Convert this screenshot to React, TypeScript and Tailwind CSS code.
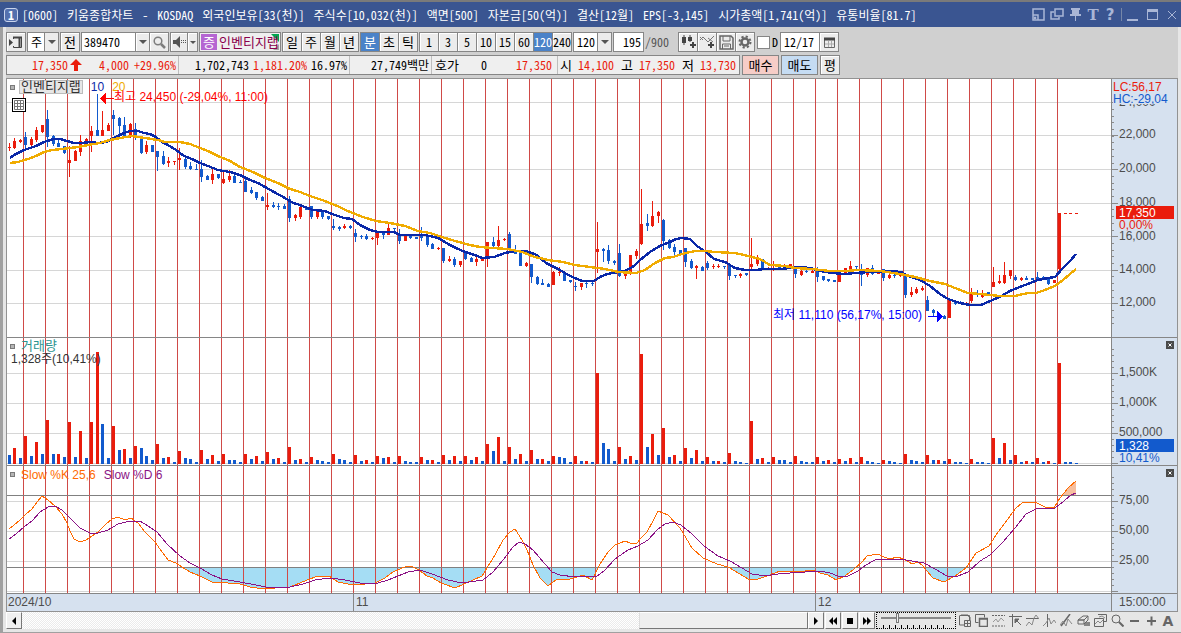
import React from "react";

const UP = "#ea1c0c";
const DOWN = "#125acd";

type Candle = [string, number, number, number, number];

// Direction followed by wick top, body top, body bottom, wick bottom.
const CANDLE_SOURCE = `
r143,147,148,151 r138,141,148,149 r139,140,142,143 b132,137,145,149 r137,139,145,147 r127,130,140,142 r125,125,132,133 b110,119,137,147
b135,136,144,146 b140,143,147,147 b146,146,153,154 r146,160,163,177 r150,151,161,161 r135,141,152,156 r138,139,143,145 r126,131,136,152
b94,130,136,136 r111,130,136,136 r123,125,131,131 b110,115,119,135 b117,118,126,134 b117,125,136,136 r123,124,135,138 b123,129,138,140
b137,137,153,154 r141,145,152,154 b145,145,152,152 b151,151,157,171 b151,156,164,165 r157,161,163,167 r161,161,162,165 r148,158,160,170
b157,159,167,169 b162,166,169,170 b164,169,170,170 b160,169,177,182 b175,176,180,180 r169,174,180,184 b174,174,178,179 r171,179,183,184
r170,176,180,182 b175,176,183,183 b180,182,183,183 b178,181,192,192 b187,190,193,194 b192,192,198,200 b196,197,201,201 r193,205,207,210
b202,205,207,208 b203,206,207,210 b204,206,209,209 b196,199,218,222 r214,215,218,221 r207,207,217,219 b208,208,210,210 b206,206,217,219
r210,211,217,219 b211,211,217,219 b216,216,219,220 b219,226,228,230 b226,227,229,231 r224,226,228,229 b225,226,228,229 b229,233,237,242
b235,236,237,239 b234,236,239,240 r237,238,239,240 r232,233,238,245 b232,232,235,239 r224,228,235,235 b228,228,229,232 b229,234,241,244
r235,235,241,241 b234,236,238,239 b237,237,239,239 b227,235,238,241 b236,237,245,247 b243,244,249,249 r247,248,249,250 b248,248,261,263
r256,259,261,262 b257,259,265,267 r261,261,265,267 b251,253,259,260 b257,258,262,262 r257,259,262,266 r257,258,261,261 r242,242,259,267
b237,242,246,249 r226,240,246,247 r238,239,240,241 b232,234,250,251 b245,250,254,254 b252,253,266,266 r262,263,266,267 b264,264,277,283
b276,277,284,285 b279,283,285,285 b283,284,287,287 r271,272,285,285 r267,272,273,276 b272,272,281,281 b280,280,282,283 b282,286,287,291
r283,283,287,290 b282,283,284,288 b282,283,284,286 r222,249,252,273 b248,249,251,262 b245,250,261,264 b260,261,263,265 b244,253,276,277
r272,273,276,279 r255,255,274,275 r249,251,256,259 r189,224,244,245 b214,223,226,231 r201,216,226,227 r211,212,216,223 b219,220,241,250
b239,240,248,249 b244,247,252,256 b250,250,254,254 b248,248,262,267 b259,261,268,269 r265,266,268,279 b266,267,271,271 b261,263,268,270
r264,266,267,269 r264,266,267,268 b266,266,267,269 b264,264,276,280 b275,275,276,278 r273,274,276,278 b273,273,275,276 r238,264,267,270
r255,259,264,266 b259,259,269,269 r267,268,269,270 r261,265,266,271 b265,266,269,269 r264,266,270,270 r264,264,267,268 b267,267,274,278
r269,271,275,276 b268,271,272,273 r270,271,273,273 b267,270,277,282 b276,276,280,281 b279,279,281,282 b280,280,282,282 r270,272,282,282
r268,268,273,273 r261,266,269,270 b266,266,267,270 b264,269,275,286 r268,268,275,277 b265,268,274,275 r271,271,274,274 b269,269,278,281
r273,275,278,279 b274,275,276,278 r273,274,276,277 b275,275,295,298 r287,292,295,297 r287,289,293,294 r286,288,290,291 b296,300,311,311
b309,310,313,316 b312,313,315,316 b315,316,319,319 r300,300,318,318 b300,302,304,305 b301,302,304,304 r302,303,305,305 r288,293,301,303
b290,293,295,297 r290,293,297,298 b292,292,295,296 r267,282,287,287 r275,281,283,284 r262,275,283,284 r270,270,276,279 b275,277,280,281
r277,278,280,281 b276,278,280,280 b278,278,280,280 b272,277,279,279 b276,277,279,279 b278,279,284,285 r280,280,283,283 r213,213,269,272
r213,213,214,213 r213,213,214,213 r213,213,214,213`;

const CANDLES: Candle[] = CANDLE_SOURCE.trim().split(/\s+/).map((t) => {
  const [h, a, b, l] = t.slice(1).split(",").map(Number);
  return [t[0], h, a, b, l];
});

// Bar direction and height, one entry for each candle.
const VOLUMES = `b9 r16 b6 r28 b8 r22 b10 r44 b10 r10 b7 r42 b7 r33 b6 r42 r112 b40 b6 r38 b14 r15 b6 r18 b16 b8 b4 r20 b6 r7 b2 r13
b6 b5 b2 r14 b5 r9 b3 r10 b4 b4 b2 r10 b5 r8 b3 r12 b5 r6 b2 r17 b4 r5 b2 r7 b4 b3 b2 r10 b5 b4 b2 r9 b3 r4 b2 r8 b6 r7 b2 r8
b3 b2 b2 r7 b4 r4 b2 r9 b4 r8 b3 r8 b4 r7 b3 r20 b13 r27 b3 r17 b5 r10 b3 r14 b5 r5 b3 r8 b7 b6 b2 r8 b3 r3 b2 r91
b21 b15 b3 r17 b5 r8 b4 r110 b17 r30 b9 r36 b7 r9 b3 r16 b6 r14 b3 r7 b3 r3 b2 r11 b3 b2 b1 r43 b5 r6 b2 r7 b4 b4 b2 r8
b3 b2 b2 r7 b3 r4 b2 r5 b3 r6 b2 r7 b3 b2 b1 r4 b3 b2 b1 r10 b4 b3 b2 r9 b4 r4 b3 r5 b2 b2 b1 r5 b2 b2 b1 r26
b6 r21 b4 r9 b2 r3 b2 r6 b2 r3 b1 r101 b2 b2 b1`
  .split(/\s+/)
  .map((t) => [t[0], Number(t.slice(1))] as [string, number]);

const MA10 =
  "10,158 14,155 18,153 24,150 30,148 36,146 42,143 47,141 54,139 60,139 67,141 74,143 82,143 90,142 98,143 106,142 112,139 118,136 124,133 130,131 138,131 144,133 150,134 156,137 162,142 168,145 176,150 184,156 192,159 200,163 208,166 218,170 230,172 240,175 250,180 258,183 265,187 274,192 285,198 293,203 297,204 305,207 313,210 325,211 332,214 344,218 352,219 360,225 370,230 378,232 394,232 400,235 425,235 438,238 448,244 456,248 465,252 475,255 482,258 494,257 505,253 515,251 526,251 537,255 546,263 560,270 570,276 582,281 594,281 600,277 607,274 625,271 634,266 640,260 650,252 660,246 670,242 676,239 682,238 690,239 697,246 706,252 714,259 725,262 735,268 745,270 755,270 765,269 780,269 790,268 798,267 810,268 820,271 832,273 845,274 855,273 870,272 890,271 901,272 908,276 920,280 930,286 940,294 948,299 960,303 970,305 981,305 990,301 1000,297 1010,291 1025,285 1038,280 1048,278 1055,277 1062,269 1070,261 1076,254";
const MA20 =
  "10,163 18,162 28,159 36,156 44,152 52,150 62,149 78,147 88,145 100,143 110,140 120,138 132,136 145,138 158,140 165,142 180,142 190,144 200,148 210,152 220,157 230,161 240,167 255,173 265,178 280,184 290,189 300,192 310,196 322,200 335,205 350,212 363,217 376,221 390,223 405,226 418,231 430,233 442,237 455,241 470,245 480,247 492,248 508,249 522,252 535,257 548,260 563,262 575,265 590,267 605,269 618,272 636,273 645,270 655,263 665,258 673,257 682,254 695,251 705,251 715,252 735,253 748,256 760,259 770,265 785,266 795,268 812,269 830,271 845,271 858,270 880,271 900,274 915,277 930,281 945,284 955,288 968,293 980,294 1000,296 1015,296 1028,293 1036,293 1045,290 1055,286 1063,280 1070,274 1076,269";
const SLOW_K =
  "9,529 14,525 20,520 26,514 32,509 37,502 42,496 48,500 55,506 62,514 67,523 70,531 74,539 80,542 86,540 92,536 98,532 105,525 112,519 118,517 125,520 131,518 138,523 145,532 155,542 162,552 168,560 176,563 182,567 190,572 200,576 212,582 228,583 240,584 250,587 263,589 275,588 290,587 300,583 307,580 318,576 329,576 338,582 348,584 365,584 375,583 385,578 393,572 400,569 407,566 413,567 419,570 427,576 433,578 441,583 455,588 464,584 482,576 490,563 495,555 503,540 510,532 515,529 522,540 527,550 533,565 540,578 548,586 556,580 570,579 583,575 592,580 600,564 608,552 615,545 625,541 630,543 637,543 641,538 647,532 653,521 658,511 668,515 680,528 686,538 692,548 703,558 717,564 728,567 740,574 748,579 758,579 770,575 780,571 790,572 805,571 813,570 820,573 828,575 836,580 845,576 854,569 862,562 867,556 878,554 884,557 890,559 897,557 904,559 912,564 918,562 923,566 926,570 933,578 944,582 955,576 966,568 976,553 989,546 996,535 1005,523 1015,509 1022,503 1035,502 1045,507 1054,508 1060,498 1068,488 1076,481";
const SLOW_D =
  "9,539 16,534 24,527 32,521 40,512 48,507 55,506 62,510 67,515 74,522 80,528 90,533 98,533 108,530 118,524 130,521 140,521 148,526 157,532 167,544 180,556 190,563 200,568 212,575 222,579 240,582 256,585 266,587 290,587 303,584 315,580 330,578 345,580 360,583 378,583 388,580 398,576 408,572 420,570 432,574 448,580 462,583 483,580 493,572 503,560 513,547 519,542 525,544 533,550 545,564 552,572 560,575 575,577 590,576 596,577 605,570 615,559 628,550 638,546 648,540 658,529 665,524 673,522 681,525 692,534 704,546 718,556 730,561 742,568 752,574 765,576 778,574 790,573 820,571 830,573 838,576 848,576 858,571 866,565 875,560 885,559 900,559 912,561 924,563 935,569 947,576 958,576 968,572 980,561 990,555 1003,542 1015,528 1026,514 1036,509 1045,508 1055,508 1064,501 1071,495 1076,493";

const candleX = (i: number) => Math.floor(9 + 5.5 * i);
const GRID_X = Array.from({ length: 48 }, (_, i) => 23 + 22 * i);

function HLines({ ys, color }: { ys: number[]; color: string }) {
  return (
    <>
      {ys.map((y) => (
        <rect key={y} x="7" y={y} width="100%" height="1" fill={color} />
      ))}
    </>
  );
}

function VLines({ top, bottom }: { top: number; bottom: number }) {
  return (
    <>
      {GRID_X.map((x) => (
        <rect key={x} x={x} y={top} width="1" height={bottom - top} fill="#cf4a48" />
      ))}
    </>
  );
}

// Every pane's drawing shares one coordinate space; this shifts it into the pane.
function Pane({ top, children }: { top: number; children: React.ReactNode }) {
  return (
    <svg className="block h-full w-full" shapeRendering="crispEdges" aria-hidden="true">
      <g transform={`translate(-7 ${-top})`}>{children}</g>
    </svg>
  );
}

function PricePane() {
  return (
    <Pane top={79}>
      <HLines ys={[102, 135, 169, 203, 236, 270, 303]} color="#d6d6d6" />
      <VLines top={79} bottom={337} />
      {CANDLES.map(([dir, h, a, b, l], i) => {
        const x = candleX(i);
        const fill = dir === "r" ? UP : DOWN;
        return (
          <g key={i} fill={fill}>
            <rect x={x} y={h} width="1" height={Math.max(0, l - h)} />
            <rect x={x - 1} y={a} width="3" height={b - a} />
          </g>
        );
      })}
      <polyline points={MA10} fill="none" stroke="#0a28a8" strokeWidth="2.4" />
      <polyline points={MA20} fill="none" stroke="#f0ab00" strokeWidth="2.4" />
      <path d="M100 98.500l6-5.500v11zM105 98h9v1h-9z" fill="#ff0000" />
      <path d="M928 316h10v1h-10zM937 311l6 5.500l-6 5.500z" fill="#0000ff" />
    </Pane>
  );
}

function VolumePane() {
  return (
    <Pane top={338}>
      <HLines ys={[373, 403, 433, 463]} color="#d6d6d6" />
      <VLines top={338} bottom={465} />
      {VOLUMES.map(([dir, h], i) => (
        <rect key={i} x={candleX(i) - 1} y={464 - h} width="3" height={h} fill={dir === "r" ? UP : DOWN} />
      ))}
    </Pane>
  );
}

function SlowPane() {
  return (
    <Pane top={466}>
      <defs>
        <clipPath id="oversold">
          <rect x="7" y="568" width="1104" height="26" />
        </clipPath>
        <clipPath id="overbought">
          <rect x="7" y="466" width="1104" height="29" />
        </clipPath>
      </defs>
      <HLines ys={[501, 531, 561, 591]} color="#d6d6d6" />
      <polygon points={`9,567 ${SLOW_K} 1076,567`} fill="#a5ddf4" clipPath="url(#oversold)" />
      <polygon points={`9,495 ${SLOW_K} 1076,495`} fill="#f6bf9f" clipPath="url(#overbought)" />
      <VLines top={466} bottom={593} />
      <HLines ys={[495, 567]} color="#808080" />
      <polyline points={SLOW_K} fill="none" stroke="#ff6a00" strokeWidth="1" />
      <polyline points={SLOW_D} fill="none" stroke="#8a1285" strokeWidth="1" />
    </Pane>
  );
}

function AxisTicks({ top, minor, major }: { top: number; minor: number[]; major: number[] }) {
  return (
    <g fill="#8a8a8a">
      {minor.map((y) => (
        <rect key={`n${y}`} x="0" y={y - top} width="2" height="1" />
      ))}
      {major.map((y) => (
        <rect key={`j${y}`} x="0" y={y - top} width="6" height="1" />
      ))}
    </g>
  );
}

function range(from: number, to: number, step: number) {
  const out: number[] = [];
  for (let v = from; v <= to; v += step) out.push(Math.round(v));
  return out;
}

function AxisLabels({ top, items }: { top: number; items: [string, number][] }) {
  return (
    <g fill="#4d4d4d">
      {items.map(([t, y]) => (
        <text key={t} x="7" y={y - top + 4} fontSize="12">
          {t}
        </text>
      ))}
    </g>
  );
}

function CloseBox() {
  return (
    <button aria-label="지표 닫기" className="absolute top-[3px] right-[3px] flex size-2 items-center justify-center bg-[#4a4a4a]">
      <svg viewBox="0 0 8 8" className="size-2" stroke="#fff" strokeWidth="1">
        <path d="M2.500 2.500l3 3M5.500 2.500l-3 3" />
      </svg>
    </button>
  );
}

const BTN =
  "flex h-5 items-center justify-center border border-[#868686] bg-[#ececec] leading-3 text-black shadow-[inset_1px_1px_0_#fff]";
const GROUPED = "-ml-px first:ml-0";
const FIELD = "h-5 border border-[#868686] bg-white pb-0.5 text-xs leading-3 outline-none";

function ArrowDown() {
  return (
    <svg viewBox="0 0 8 4" className="h-1 w-2" fill="#555" aria-hidden="true">
      <path d="M0 0h8L4 4z" />
    </svg>
  );
}

function Combo({ label, value, width }: { label: string; value: string; width: string }) {
  return (
    <label className={`relative flex h-5 border border-[#868686] bg-white ${width}`}>
      <select aria-label={label} defaultValue={value} className="w-full appearance-none bg-transparent pl-[3px] text-xs leading-3 outline-none">
        <option>{value}</option>
      </select>
      <span className="pointer-events-none absolute inset-y-0 right-0 flex w-3.5 items-center justify-center border-l border-[#868686] bg-[#ececec]">
        <ArrowDown />
      </span>
    </label>
  );
}

function Segmented({ items, active, size }: { items: string[]; active?: string; size: string }) {
  return (
    <div className="flex">
      {items.map((t) => (
        <button key={t} className={`${BTN} ${GROUPED} w-5 ${size} ${t === active ? "bg-[#4a82c8]! text-white! shadow-none!" : ""}`}>
          {t}
        </button>
      ))}
    </div>
  );
}

const TITLE_PARTS = [
  "[0600]",
  "키움종합차트",
  "-",
  "KOSDAQ",
  "외국인보유[33(천)]",
  "주식수[10,032(천)]",
  "액면[500]",
  "자본금[50(억)]",
  "결산[12월]",
  "EPS[-3,145]",
  "시가총액[1,741(억)]",
  "유통비율[81.7]",
];

function TitleBar() {
  return (
    <header className="flex h-[25px] items-center bg-[#3a5591] pr-1 pl-1 text-white">
      <span className="mr-1 flex size-[14px] items-center justify-center rounded-[3px] border border-[#c9d4ec] bg-[#5470ae] text-xs leading-3 font-bold">1</span>
      <h1 className="flex grow gap-[9px] text-xs leading-4 whitespace-nowrap">
        {TITLE_PARTS.map((t) => (
          <span key={t}>{t}</span>
        ))}
      </h1>
      <div className="flex items-center gap-[5px] text-[#a9b6d6]">
        <button aria-label="창 축소">
          <svg viewBox="0 0 13 13" className="size-[13px]" fill="none" stroke="currentColor" strokeWidth="1.5">
            <path d="M1 1h11v11H1zM1 7h5v5" />
            <path d="M2.500 9.500h1v1h-1z" fill="currentColor" />
          </svg>
        </button>
        <button aria-label="창 복제">
          <svg viewBox="0 0 14 13" className="h-[13px] w-3.5" fill="none" stroke="currentColor" strokeWidth="1.5">
            <path d="M5 1h8v7H5zM4 4H1v7h8V9" />
          </svg>
        </button>
        <button aria-label="고정">
          <svg viewBox="0 0 13 13" className="size-[13px]" fill="currentColor">
            <path d="M2 0h9v2h-1v4h2v2H7v5H6V8H1V6h2V2H2z" />
          </svg>
        </button>
        <button aria-label="글꼴" className="w-3 font-['DejaVu_Serif',serif] text-[15px] leading-4 font-bold">T</button>
        <button aria-label="도움말" className="w-3 font-['DejaVu_Sans',sans-serif] text-[15px] leading-4 font-bold">?</button>
        <span className="h-[13px] w-px bg-[#7687a8]" />
        <button aria-label="최소화" className="h-[13px] w-[11px] border-b-2 border-current" />
        <button aria-label="최대화" className="ml-1 h-[11px] w-[11px] border border-t-[3px] border-current" />
        <button aria-label="닫기" className="ml-1">
          <svg viewBox="0 0 10 10" className="size-2.5" stroke="currentColor" strokeWidth="1">
            <path d="M1 1l8 8M9 1l-8 8" />
          </svg>
        </button>
      </div>
    </header>
  );
}

function Toolbar() {
  return (
    <div className="flex h-5 items-center gap-px">
      <button className={`${BTN} w-5`} aria-label="좌측 메뉴">
        <svg viewBox="0 0 14 13" className="h-[13px] w-3.5" fill="none" stroke="#444">
          <path d="M4.500 3V1.500h8v10h-8V10" />
          <path d="M4 1.500h9M10.500 2v9" strokeWidth="2" />
          <path d="M0 3v7l4-3.500z" fill="#444" stroke="none" />
        </svg>
      </button>
      <Combo label="시장 구분" value="주" width="w-8" />
      <button className={`${BTN} w-5 text-[13px]`}>전</button>
      <div className="flex">
        <input aria-label="종목코드" defaultValue="389470" className={`${FIELD} w-[55px] pl-0.5`} />
        <button className={`${BTN} -ml-px w-[15px]`} aria-label="최근 종목">
          <ArrowDown />
        </button>
        <button className={`${BTN} -ml-px w-5`} aria-label="종목 검색">
          <svg viewBox="0 0 13 13" className="size-[13px]" fill="none" stroke="#7d7d7d" strokeWidth="1.5">
            <circle cx="5" cy="5" r="3.800" />
            <path d="M8 8l4 4" strokeWidth="2.500" />
          </svg>
        </button>
      </div>
      <div className="flex">
        <button className={`${BTN} w-[18px]`} aria-label="소리">
          <svg viewBox="0 0 13 12" className="h-3 w-[13px]" fill="#555">
            <path d="M0 4h3l4-4v12L3 8H0zM8 4h1v1H8zM8 6h1v1H8zM10 4h1v1h-1zM10 6h1v1h-1zM12 4h1v1h-1zM12 6h1v1h-1z" />
          </svg>
        </button>
        <button className={`${BTN} -ml-px w-[11px]`} aria-label="소리 설정">
          <svg viewBox="0 0 6 3" className="h-[3px] w-1.5" fill="#555">
            <path d="M0 0h6L3 3z" />
          </svg>
        </button>
      </div>
      <button className="relative flex h-5 w-[82px] items-center gap-0.5 border border-[#868686] bg-[#efefef] pl-px text-[13px] leading-3 whitespace-nowrap text-[#8a004b]">
        <span className="flex size-4 shrink-0 items-center justify-center bg-[#b565d2] text-white">증</span>
        <svg viewBox="0 0 8 16" className="absolute top-px right-px h-4 w-2" aria-hidden="true">
          <path d="M0 0h8v8z" fill="#00a651" />
          <path d="M8 10v6H2z" fill="#a5a5a5" />
        </svg>
        <span className="relative">인벤티지랩</span>
      </button>
      <Segmented items={["일", "주", "월", "년"]} size="text-[13px]" />
      <Segmented items={["분", "초", "틱"]} active="분" size="text-[13px]" />
      <Segmented items={["1", "3", "5", "10", "15", "60", "120", "240"]} active="120" size="text-xs" />
      <Combo label="분 주기" value="120" width="w-[39px]" />
      <div className="flex items-center">
        <input aria-label="표시 봉 수" defaultValue="195" className={`${FIELD} w-[31px] pr-0.5 text-right`} />
        <span className="w-[33px] pl-px text-xs leading-3 text-[#555]">/900</span>
      </div>
      <div className="flex">
        <button className={`${BTN} w-5`} aria-label="차트 추가">
          <svg viewBox="0 0 15 14" className="h-3.5 w-[15px]" fill="#444">
            <path d="M1 2h4v6H1zM2.500 0h1v10h-1zM7 2h4v4H7zM8.500 0h1v7h-1zM11 7h2v2h2v2h-2v2h-2v-2H9V9h2z" />
          </svg>
        </button>
        <button className={`${BTN} -ml-px w-5`} aria-label="지표 추가">
          <svg viewBox="0 0 15 14" className="h-3.5 w-[15px]">
            <path d="M0 5l3-3 5 5 6-6M0 2l3 3M8 3l5 4" fill="none" stroke="#777" />
            <path d="M10 7h2v2h2v2h-2v2h-2v-2H8V9h2z" fill="#444" />
          </svg>
        </button>
        <button className={`${BTN} -ml-px w-5`} aria-label="저장">
          <svg viewBox="0 0 15 15" className="size-[15px]" fill="none" stroke="#666">
            <path d="M1 1h11l2 2v11H1z" strokeWidth="1.500" />
            <path d="M4 1v5h7V1M3.500 14V9h8v5M5 11h5" />
          </svg>
        </button>
        <button className={`${BTN} -ml-px w-5`} aria-label="설정">
          <svg viewBox="0 0 14 14" className="size-3.5" fill="none" stroke="#666">
            <circle cx="7" cy="7" r="3.500" strokeWidth="2.500" />
            <circle cx="7" cy="7" r="5.500" strokeWidth="2" strokeDasharray="2.200 2.120" />
          </svg>
        </button>
      </div>
      <label className="ml-px flex items-center gap-0.5 text-xs leading-3">
        <input type="checkbox" className="size-[13px] appearance-none border border-[#868686] bg-white" />D
      </label>
      <div className="ml-px flex">
        <input aria-label="기준일" defaultValue="12/17" className={`${FIELD} w-10 pl-[3px]`} />
        <button className={`${BTN} -ml-px w-5`} aria-label="달력">
          <svg viewBox="0 0 11 11" className="size-[11px]" fill="none" stroke="#666">
            <path d="M.5 1.500h10v9H.5z" />
            <path d="M0 2h11" stroke="#444" strokeWidth="3" />
            <path d="M1 7h9M4.500 4v6M7.500 4v6" stroke="#aaa" />
          </svg>
        </button>
      </div>
    </div>
  );
}

function QuoteBar() {
  const red = "text-[#ea1c0c]";
  return (
    <div className="mt-[3px] flex h-5 gap-0.5">
      <dl className="flex h-5 items-stretch border border-[#868686] bg-[#efefef] pr-[3px] text-right text-xs leading-[18px] whitespace-nowrap [&>*]:border-[#bdbdbd]">
        <dd className={`w-[61px] ${red}`}>17,350</dd>
        <dd className="flex w-[15px] items-center justify-center">
          <svg viewBox="0 0 12 12" className="size-3" fill={UP} role="img" aria-label="상승">
            <path d="M6 0l6 6H8v6H4V6H0z" />
          </svg>
        </dd>
        <dd className={`w-[46px] ${red}`}>4,000</dd>
        <dd className={`w-[50px] border-r pr-0.5 ${red}`}>+29.96%</dd>
        <dd className="w-[70px]">1,702,743</dd>
        <dd className={`w-[58px] ${red}`}>1,181.20%</dd>
        <dd className="w-[43px] border-r pr-0.5">16.97%</dd>
        <dd className="w-[82px] border-r pr-0.5">27,749백만</dd>
        <dt className="w-[27px] text-[13px]">호가</dt>
        <dd className="w-[28px]">0</dd>
        <dd className={`w-[71px] border-r pr-[5px] ${red}`}>17,350</dd>
        <dt className="w-[14px] text-[13px]">시</dt>
        <dd className={`w-[42px] ${red}`}>14,100</dd>
        <dt className="w-[19px] text-[13px]">고</dt>
        <dd className={`w-[42px] ${red}`}>17,350</dd>
        <dt className="w-[19px] text-[13px]">저</dt>
        <dd className={`w-[42px] ${red}`}>13,730</dd>
      </dl>
      <button className="h-5 w-[37px] border border-[#868686] bg-[#f6cdc7] text-[13px] leading-3">매수</button>
      <button className="h-5 w-[37px] border border-[#868686] bg-[#c5dcf3] text-[13px] leading-3">매도</button>
      <button className={`${BTN} w-5 text-[13px]`}>평</button>
    </div>
  );
}

function Marker() {
  return <span className="mt-[5px] size-[5px] shrink-0 border border-[#7a7a7a] bg-[#b5b5b5]" />;
}

function Chart() {
  return (
    <main className="grid grid-cols-[minmax(0,1fr)_66px] grid-rows-[259px_128px_128px_17px] border border-[#929292] bg-white font-['Liberation_Sans','Noto_Sans_CJK_KR',sans-serif] text-xs leading-3">
      <section className="relative border-b border-[#868686]">
        <PricePane />
        <div className="absolute top-px left-[3px] flex items-start gap-2 whitespace-nowrap">
          <div className="flex gap-1">
            <Marker />
            <button className="h-3.5 border border-[#bcbcbc] bg-[#e6e6e6] px-px text-[13px] leading-3 text-[#333]">인벤티지랩</button>
          </div>
          <span className="mt-px text-[#0a28a8]">10</span>
          <span className="mt-px text-[#f0ab00]">20</span>
        </div>
        <button aria-label="데이터 표" className="absolute top-[19px] left-[5px] flex size-3.5 items-center justify-center border border-black bg-white">
          <svg viewBox="0 0 10 10" className="size-2.5" fill="none" stroke="#777">
            <path d="M.5.5h9v9h-9zM.5 3.500h9M.5 6.500h9M3.500.5v9M6.500.5v9" />
          </svg>
        </button>
        <span className="absolute top-3 left-[107px] whitespace-nowrap text-[#ff0000]">최고 24,450 (-29,04%, 11:00)</span>
        <span className="absolute top-[230px] left-[766px] whitespace-nowrap text-[#0000ff]">최저 11,110 (56,17%, 15:00)</span>
      </section>
      <aside className="relative border-b border-l border-[#868686] bg-[#d6e1ef]">
        <svg className="block h-full w-full" shapeRendering="crispEdges">
          <AxisTicks top={79} minor={range(109, 330, 6.7)} major={[102, 135, 169, 203, 236, 270, 303]} />
          <AxisLabels
            top={79}
            items={[["24,000", 102], ["22,000", 134], ["20,000", 168], ["18,000", 202], ["16,000", 236], ["14,000", 269], ["12,000", 302]]}
          />
          <rect x="1" y="1" width="64" height="24" fill="#d6e1ef" />
          <text x="1" y="12" fontSize="12" fill={UP}>LC:56,17</text>
          <text x="1" y="24" fontSize="12" fill={DOWN}>HC:-29,04</text>
          <rect x="7" y="139" width="56" height="13" fill="#d6e1ef" />
          <rect x="4" y="127" width="58" height="13" fill={UP} />
          <text x="7" y="138" fontSize="12" fill="#fff">17,350</text>
          <text x="7" y="150" fontSize="12" fill={UP}>0,00%</text>
        </svg>
      </aside>

      <section className="relative border-b border-[#868686]">
        <VolumePane />
        <div className="absolute top-px left-[3px] flex items-start gap-1.5">
          <Marker />
          <span className="mt-px text-[13px] text-[#2b9490]">거래량</span>
        </div>
        <span className="absolute top-[15px] left-1 text-[#333]">1,328주(10,41%)</span>
      </section>
      <aside className="relative border-b border-l border-[#868686] bg-[#d6e1ef]">
        <svg className="block h-full w-full" shapeRendering="crispEdges">
          <AxisTicks top={338} minor={range(349, 463, 6)} major={[373, 403, 433, 463]} />
          <AxisLabels top={338} items={[["1,500K", 372], ["1,000K", 402], ["500,000", 432]]} />
          <rect x="4" y="101" width="58" height="13" fill={DOWN} />
          <text x="7" y="112" fontSize="12" fill="#fff">1,328</text>
          <text x="7" y="124" fontSize="12" fill={DOWN}>10,41%</text>
        </svg>
        <CloseBox />
      </aside>

      <section className="relative border-b border-[#868686]">
        <SlowPane />
        <div className="absolute top-px left-[3px] flex items-start gap-1.5 whitespace-nowrap">
          <Marker />
          <span className="mt-0.5 mr-0.5 text-[#ff6a00]">Slow %K 25,6</span>
          <span className="mt-0.5 text-[#8a1285]">Slow %D 6</span>
        </div>
      </section>
      <aside className="relative border-b border-l border-[#868686] bg-[#d6e1ef]">
        <svg className="block h-full w-full" shapeRendering="crispEdges">
          <AxisTicks top={466} minor={range(477, 591, 6)} major={[501, 531, 561, 591]} />
          <AxisLabels top={466} items={[["75,00", 500], ["50,00", 530], ["25,00", 560]]} />
        </svg>
        <CloseBox />
      </aside>

      <div className="flex bg-[#d6e1ef] leading-4 text-[#4d4d4d]">
        <span className="w-[346px] pl-px">2024/10</span>
        <span className="w-[462px] border-l border-[#868686] pl-0.5">11</span>
        <span className="border-l border-[#868686] pl-0.5">12</span>
      </div>
      <div className="border-l border-[#868686] bg-[#d6e1ef] pl-[7px] leading-4 text-[#4d4d4d]">15:00:00</div>
    </main>
  );
}

const SCROLL_BTN =
  "flex h-[17px] w-4 shrink-0 items-center justify-center border border-t-white border-l-white border-r-[#777] border-b-[#777] bg-[#f0f0f0]";

const TOOLS: [string, React.ReactNode][] = [
  ["창 추가", <><path d="M3 1h7a2 2 0 0 0 2 2v3M1.500 2v9H6" /><path d="M1.500 1.500h10v5M6.500 6.500h6v6h-6zM9.500 6.500v6M6.500 9.500h6" /></>],
  ["창 복사", <><path d="M.5.5h9v3M.5.5v8h3" /><path d="M4.500 4.500h8v8h-8zM5 5h7" strokeWidth="1.500" /></>],
  ["영역 지정", <><path d="M0 1.500h13M0 12h13" strokeDasharray="2 1" /><path d="M1 8l3-3 2 3 3-4 3 3" stroke="#999" /></>],
  ["십자선", <><path d="M0 2.500h13M3.500 0v13" /><path d="M6 5h4L6 9zM7 6l5 5" fill="currentColor" /></>],
  ["수평선", <><path d="M0 4.500h13" /><path d="M0 12l3-4 3 3 2-7 2-3 3 4" stroke="#888" /></>],
  ["수직선", <><path d="M4.500 0v13" /><path d="M0 12l3-3 3-5 2 6 3-4 2 3" stroke="#888" /></>],
  ["추세선", <><path d="M1 12L10 0" strokeWidth="1.500" /><path d="M0 11l3-4 3 5 2-7 4 5" stroke="#888" /></>],
  ["모두 지우기", <><path d="M1 6l5-4h5l-4 4zM1 6h6v4H1zM7 6l4-4v4L7 10" /><path d="M8 12V9M10 12V8M12 12V8" strokeWidth="1.500" /></>],
  ["차트 겹침", <><path d="M4 .5h8.500v7H10M.5 4.500h9v8h-9z" /><path d="M1 10l3-3 2 2 3-3M5 3l3-1 3 2" stroke="#888" /></>],
  ["돋보기", <><circle cx="5" cy="5" r="4" /><path d="M8 8l4.500 4.500" strokeWidth="2" /></>],
  ["축소", <path d="M2 7h9" strokeWidth="2" />],
  ["확대", <path d="M2 7h9M6.500 2.500v9" strokeWidth="2" />],
];

function BottomBar() {
  return (
    <footer className="flex h-5 items-start pr-1">
      <button className={SCROLL_BTN} aria-label="왼쪽으로">
        <svg viewBox="0 0 4 8" className="h-2 w-1">
          <path d="M4 0v8L0 4z" />
        </svg>
      </button>
      <div className="flex h-[17px] grow justify-end bg-[repeating-conic-gradient(#ebebeb_0_25%,#fff_0_50%)] bg-[length:2px_2px]">
        <div className="h-[17px] w-[169px] border border-t-white border-r-[#777] border-b-[#777] border-l-[#ddd] bg-[#efefef]" />
      </div>
      <div className="flex">
        <button className={SCROLL_BTN} aria-label="오른쪽으로">
          <svg viewBox="0 0 4 8" className="h-2 w-1">
            <path d="M0 0v8l4-4z" />
          </svg>
        </button>
        <button className={`${SCROLL_BTN} ml-px`} aria-label="뒤로 재생">
          <svg viewBox="0 0 8 8" className="size-2">
            <path d="M4 0v8L0 4zM8 0v8L4 4z" />
          </svg>
        </button>
        <button className={`${SCROLL_BTN} ml-px`} aria-label="정지">
          <span className="size-1.5 bg-black" />
        </button>
        <button className={`${SCROLL_BTN} ml-px`} aria-label="빨리 재생">
          <svg viewBox="0 0 8 8" className="size-2">
            <path d="M0 0v8l4-4zM4 0v8l4-4z" />
          </svg>
        </button>
      </div>
      <div className="ml-px flex h-[17px] w-20 flex-col justify-between border border-dotted border-black px-1">
        <input
          type="range"
          aria-label="확대 비율"
          defaultValue="22"
          className="h-2.5 w-full appearance-none bg-[linear-gradient(#888,#888)] bg-[length:100%_2px] bg-center bg-no-repeat [&::-webkit-slider-thumb]:h-2.5 [&::-webkit-slider-thumb]:w-[3px] [&::-webkit-slider-thumb]:appearance-none [&::-webkit-slider-thumb]:border [&::-webkit-slider-thumb]:border-[#777] [&::-webkit-slider-thumb]:bg-[#eee]"
        />
        <svg className="h-[3px] w-full" shapeRendering="crispEdges" aria-hidden="true">
          {Array.from({ length: 11 }, (_, i) => (
            <rect key={i} x={2 + i * 6} y="0" width="1" height="3" />
          ))}
        </svg>
      </div>
      <div className="ml-0.5 flex h-[17px] items-center gap-1 text-[#666]">
        {TOOLS.map(([name, art]) => (
          <button key={name} aria-label={name}>
            <svg viewBox="0 0 13 13" className="size-[13px]" fill="none" stroke="currentColor">
              {art}
            </svg>
          </button>
        ))}
        <button aria-label="자동 크기" className="w-3 font-['DejaVu_Sans',sans-serif] text-sm leading-4 font-bold">A</button>
      </div>
    </footer>
  );
}

export default function App() {
  return (
    <div className="border-t-2 border-[#7a7a7a] bg-[#e6e6e6] font-['Noto_Sans_Mono_CJK_KR','Noto_Sans_CJK_KR',monospace] text-black">
      <TitleBar />
      <div className="border-b border-l-[3px] border-[#a0a0a0] pr-[3px] pl-[3px]">
        <div className="bg-[#d0d0d0] pt-[5px] pb-[3px]">
          <Toolbar />
          <QuoteBar />
        </div>
        <Chart />
        <BottomBar />
      </div>
    </div>
  );
}
